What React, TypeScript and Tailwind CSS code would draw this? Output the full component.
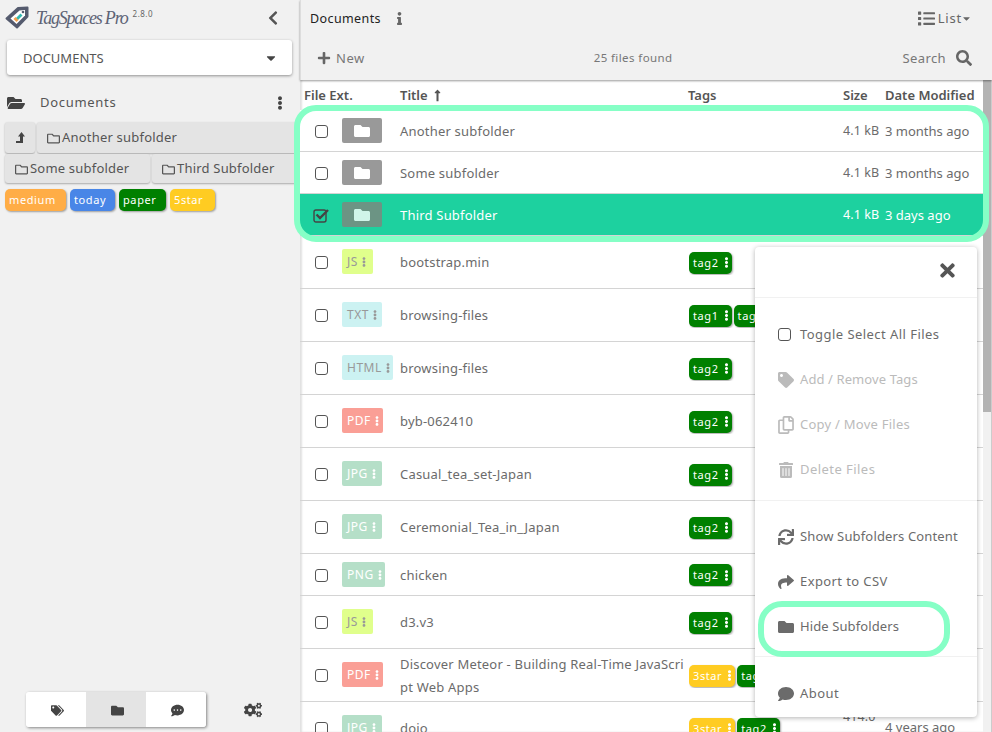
import React from "react";
import {
  FaChevronLeft, FaFolderOpen, FaEllipsisV, FaRegFolder, FaInfo, FaPlus, FaSearch, FaList,
  FaFolder, FaTag, FaTags, FaRegCopy, FaTrashAlt, FaSync, FaShare, FaComment,
  FaCommentDots, FaCogs, FaTimes, FaLongArrowAltUp, FaCaretDown,
} from "react-icons/fa";

const font = { fontFamily: '"Noto Sans", "Liberation Sans", sans-serif' };

function Logo() {
  return (
    <svg width="24" height="24" viewBox="0 0 24 24" className="shrink-0">
      <path d="M1.5 12.5 L13 2 L22.5 1.5 L22.5 10.5 L12 21.5 Z" fill="#555b6e" stroke="#555b6e" strokeWidth="2" strokeLinejoin="round" />
      <path d="M5.5 12.5 L14.5 4.5 L20 4 L20 9.5 L11.5 18 Z" fill="#fff" />
      <path d="M10.5 12.5 L15.5 7.5 L17.5 9.5 L12.5 14.5 Z" fill="#34b8b0" />
      <path d="M8.5 13 L10.5 11 L13.5 14 L11.5 16 Z" fill="#f6a04d" />
      <circle cx="18" cy="6" r="1.3" fill="#555b6e" />
    </svg>
  );
}

function Check({ checked }: { checked?: boolean }) {
  if (checked) {
    return (
      <svg width="17" height="15" viewBox="0 0 17 15" className="shrink-0">
        <rect x="1" y="2" width="12" height="12" rx="2" fill="none" stroke="#444" strokeWidth="1.4" />
        <path d="M3.5 6.5 L7 10 L15 2" fill="none" stroke="#444" strokeWidth="2.4" />
      </svg>
    );
  }
  return <span className="block w-[13px] h-[13px] border-[1.5px] border-[#555] rounded-[3px]" />;
}

function Tag({ label, color, kebab = true }: { label: string; color: string; kebab?: boolean }) {
  return (
    <span className={`inline-flex items-center h-[22px] rounded-[5px] pl-[4px] text-white text-[11px] tracking-[0.6px] shadow-[1px_1px_2px_rgba(0,0,0,0.35)] shrink-0 ${color}`}>
      <span className="pt-[1px]">{label}</span>
      {kebab && <FaEllipsisV className="ml-[2px] text-[11px]" />}
    </span>
  );
}

type Row = {
  ext: string; extBg: string; extText: string; extW: string; title: React.ReactNode; h: string;
  tags?: React.ReactNode; size?: React.ReactNode; date?: string;
};

const jpg = { extBg: "bg-[#b5dfc8]", extText: "text-white", extW: "w-[40px]" };
const pdf = { extBg: "bg-[#fa9f96]", extText: "text-white", extW: "w-[41px]" };
const js = { extBg: "bg-[#e0ff8c]", extText: "text-[#999]", extW: "w-[31px]" };
const txt = { extBg: "bg-[#ccf2f2]", extText: "text-[#999]", extW: "w-[40px]" };

const tag2 = <Tag label="tag2" color="bg-[#008000]" />;

const rows: Row[] = [
  { ext: "JS", ...js, title: "bootstrap.min", h: "h-[53px]", tags: tag2 },
  { ext: "TXT", ...txt, title: "browsing-files", h: "h-[53px]", tags: <><Tag label="tag1" color="bg-[#008000]" /><Tag label="tag2" color="bg-[#008000]" /></> },
  { ext: "HTML", ...txt, extW: "w-[51px]", title: "browsing-files", h: "h-[53px]", tags: tag2 },
  { ext: "PDF", ...pdf, title: "byb-062410", h: "h-[53px]", tags: tag2 },
  { ext: "JPG", ...jpg, title: "Casual_tea_set-Japan", h: "h-[53px]", tags: tag2 },
  { ext: "JPG", ...jpg, title: "Ceremonial_Tea_in_Japan", h: "h-[53px]", tags: tag2 },
  { ext: "PNG", ...jpg, extW: "w-[43px]", title: <span className="block pt-[1px]">chicken</span>, h: "h-[42px]", tags: tag2 },
  { ext: "JS", ...js, title: "d3.v3", h: "h-[53px]", tags: tag2 },
  { ext: "PDF", ...pdf, title: <span className="block pt-[1px]">Discover Meteor - Building Real-Time JavaScri<br />pt Web Apps</span>, h: "h-[53px]", tags: <><Tag label="3star" color="bg-[#ffcc22]" /><Tag label="tag2" color="bg-[#008000]" /></> },
  { ext: "JPG", ...jpg, title: "dojo", h: "h-[53px]", tags: <><Tag label="3star" color="bg-[#ffcc22]" /><Tag label="tag2" color="bg-[#008000]" /></>, size: <>414.0<br />kB</>, date: "4 years ago" },
];

function FolderRow({ title, date, selected }: { title: string; date: string; selected?: boolean }) {
  return (
    <div className={`flex items-center h-[42px] border-b border-[#d4d4d4] ${selected ? "bg-[#1dd19f] text-white" : "bg-white text-[#6b6b6b]"}`}>
      <span className="w-[42px] flex justify-center pl-[1px] pt-[1px]">
        <Check checked={selected} />
      </span>
      <span className={`w-[40px] h-[25px] rounded-[2px] flex items-center justify-center ${selected ? "bg-[#6c9484]" : "bg-[#999]"}`}>
        <FaFolder className={`text-[16px] ${selected ? "text-[#d0f5e9]" : "text-white"}`} />
      </span>
      <span className="ml-[18px] w-[443px] pt-[2px] text-[13px] tracking-[0.2px]">{title}</span>
      <span className="w-[42px] pt-[2px] text-[12.5px] tracking-[0.1px] whitespace-nowrap">4.1 kB</span>
      <span className="pt-[2px] text-[13px] tracking-[0px] whitespace-nowrap">{date}</span>
    </div>
  );
}

function MenuItem({ icon, label, disabled, track }: { icon: React.ReactNode; label: string; disabled?: boolean; track: string }) {
  return (
    <div className={`flex items-center h-[45px] pl-[23px] ${disabled ? "text-[#bbb]" : "text-[#6b6b6b]"}`}>
      <span className="w-[22px] flex justify-start text-[16px]">{icon}</span>
      <span className={`text-[13px] whitespace-nowrap ${track}`}>{label}</span>
    </div>
  );
}

function SideBtn({ children, cls }: { children: React.ReactNode; cls: string }) {
  return (
    <div className={`flex items-center bg-[#e4e4e4] rounded-[3px] shadow-[0_1px_2px_rgba(0,0,0,0.3)] text-[#555] text-[13px] tracking-[0.2px] whitespace-nowrap ${cls}`}>
      {children}
    </div>
  );
}

export default function App() {
  return (
    <div style={font} className="relative w-[992px] h-[732px] overflow-hidden flex bg-white">
      {/* Sidebar */}
      <aside className="w-[300px] h-full shrink-0 bg-[#f1f1f1] flex flex-col overflow-hidden">
        <div className="flex items-center h-[40px] pl-[5px] pb-[5px] pt-[1px]">
          <Logo />
          <span className="ml-[7px] text-[#5d6375] text-[18px] italic tracking-[-1.2px] whitespace-nowrap" style={{ fontFamily: '"Liberation Serif", serif' }}>TagSpaces Pro</span>
          <span className="ml-[5px] mb-[8px] text-[8px] tracking-[0.5px] text-[#666]">2.8.0</span>
          <FaChevronLeft className="ml-auto mr-[19px] text-[16px] text-[#555]" />
        </div>
        <div className="mx-[7px] w-[285px] h-[35px] bg-white rounded-[3px] shadow-[0_1px_3px_rgba(0,0,0,0.4)] flex items-center pl-[16px] pr-[14px] text-[13px] tracking-[0px] text-[#555]">
          <span className="pt-[2px]">DOCUMENTS</span>
          <FaCaretDown className="ml-auto text-[14px] text-[#444]" />
        </div>
        <div className="flex items-center h-[26px] mt-[14px] pt-[1px] pl-[7px] pr-[13px] text-[#555] text-[13px] tracking-[0.7px]">
          <FaFolderOpen className="text-[18px] w-[18px] shrink-0 text-[#444]" />
          <span className="ml-[15px]">Documents</span>
          <FaEllipsisV className="ml-auto text-[14px] text-[#444]" />
        </div>
        <div className="mt-[7px] pl-[5px] flex gap-[2px] h-[31px]">
          <SideBtn cls="w-[30px] justify-center">
            <svg width="10" height="12" viewBox="0 0 10 12"><path d="M6.5 0 L10 4.5 H8 V11 H1 V9 H5 V4.5 H3 Z" fill="#444" /></svg>
          </SideBtn>
          <SideBtn cls="flex-1 pl-[10px] pt-[1px] -mr-[6px]"><FaRegFolder className="text-[13px] mr-[2px] text-[#555]" />Another subfolder</SideBtn>
        </div>
        <div className="mt-[1px] pl-[5px] flex gap-[2px] h-[29px]">
          <SideBtn cls="w-[145px] pl-[10px] pt-[1px]"><FaRegFolder className="text-[13px] mr-[2px]" />Some subfolder</SideBtn>
          <SideBtn cls="flex-1 pl-[10px] pt-[1px] -mr-[6px]"><FaRegFolder className="text-[13px] mr-[2px]" />Third Subfolder</SideBtn>
        </div>
        <div className="mt-[6px] pl-[5px] flex gap-[4px]">
          <Tag label="medium" color="bg-[#ffad46] w-[61px]" kebab={false} />
          <Tag label="today" color="bg-[#4986e7] w-[45px]" kebab={false} />
          <Tag label="paper" color="bg-[#008000] w-[47px]" kebab={false} />
          <Tag label="5star" color="bg-[#ffcc22] w-[45px]" kebab={false} />
        </div>
        <div className="mt-auto mb-[5px] ml-[26px] flex items-center">
          <div className="flex h-[35px] w-[180px] rounded-[3px] shadow-[1px_1px_3px_rgba(0,0,0,0.45)] overflow-hidden text-[#444] text-[13px]">
            <span className="w-[60px] bg-white flex items-center justify-center pl-[3px] pt-[1px]"><FaTags /></span>
            <span className="w-[60px] bg-[#e4e4e4] flex items-center justify-center pl-[3px] pt-[1px]"><FaFolder /></span>
            <span className="w-[60px] bg-white flex items-center justify-center pl-[3px] pt-[1px]"><FaCommentDots /></span>
          </div>
          <FaCogs className="ml-[38px] text-[18px] text-[#444]" />
        </div>
      </aside>

      {/* Main */}
      <main className="flex-1 min-w-0 h-full flex flex-col shadow-[inset_2px_0_2px_rgba(0,0,0,0.12)]">
        <header className="h-[80px] shrink-0 bg-[#f1f1f1] shadow-[0_1px_2px_rgba(0,0,0,0.4)] z-10 flex flex-col border-l border-[#ddd]">
          <div className="flex items-center h-[37px] pl-[9px] pr-[20px]">
            <span className="pt-[1px] text-[#222] text-[12.5px] tracking-[0.4px]">Documents</span>
            <FaInfo className="ml-[12px] text-[13px] text-[#666]" />
            <span className="ml-auto flex items-center text-[#666] text-[13px] tracking-[0.8px]">
              <FaList className="text-[17px] mr-[3px]" />List<FaCaretDown className="text-[11px] -ml-[1px]" />
            </span>
          </div>
          <div className="flex items-center h-[42px] pl-[16px] pr-[20px] text-[#777] text-[13px]">
            <FaPlus className="text-[14px] text-[#666] mr-[5px]" />
            <span className="pt-[1px] tracking-[0.5px]">New</span>
            <span className="ml-[229px] text-[11.5px] tracking-[0.4px] whitespace-nowrap">25 files found</span>
            <span className="pt-[1px] ml-auto tracking-[0.4px]">Search</span>
            <FaSearch className="ml-[10px] text-[16px] text-[#666]" />
          </div>
        </header>

        <div className="flex-1 flex min-h-0">
          <div className="w-[683px] shrink-0 overflow-hidden">
            <div className="flex items-center h-[30px] pl-[4px] pt-[1px] text-[#555] text-[13px] font-semibold whitespace-nowrap">
              <span className="w-[96px]">File Ext.</span>
              <span className="w-[288px] flex items-center">Title<FaLongArrowAltUp className="ml-[3px] text-[13px]" /></span>
              <span className="w-[155px]">Tags</span>
              <span className="w-[42px]">Size</span>
              <span>Date Modified</span>
            </div>
            <FolderRow title="Another subfolder" date="3 months ago" />
            <FolderRow title="Some subfolder" date="3 months ago" />
            <FolderRow title="Third Subfolder" date="3 days ago" selected />
            {rows.map((r, i) => (
              <div key={i} className={`flex items-center border-b border-[#d4d4d4] text-[#6b6b6b] ${r.h}`}>
                <span className="w-[42px] flex justify-center pl-[1px] pt-[1px]"><Check /></span>
                <span className="w-[58px] shrink-0 flex items-center -mt-[1px]">
                  <span className={`${r.extBg} ${r.extText} ${r.extW} h-[25px] rounded-[2px] inline-flex items-center pl-[5px] pt-[1px] text-[12px] tracking-[0.5px] gap-[1px]`}>
                    {r.ext}<FaEllipsisV className="text-[10px]" />
                  </span>
                </span>
                <span className="w-[288px] shrink-0 text-[13px] tracking-[0.2px] leading-[23px] whitespace-nowrap">{r.title}</span>
                <span className="w-[155px] shrink-0 flex gap-[2px] overflow-hidden pt-[2px] pb-[1px] ml-[1px] -mr-[1px]">{r.tags}</span>
                <span className="w-[42px] shrink-0 text-[12.5px] tracking-[0.1px] leading-[23px]">{r.size}</span>
                <span className="text-[13px] tracking-[0px] whitespace-nowrap">{r.date}</span>
              </div>
            ))}
          </div>
          <div className="w-[9px] shrink-0 bg-[#f1f1f1] self-stretch border-r border-[#ccc]">
            <div className="h-[332px] bg-[#b3b3b3]" />
          </div>
        </div>
      </main>

      {/* Floating menu */}
      <div className="absolute left-[755px] top-[247px] w-[222px] h-[470px] bg-white rounded-[4px] shadow-[0_1px_5px_rgba(0,0,0,0.3)] z-20 flex flex-col">
        <div className="h-[51px] shrink-0 border-b border-[#f1f1f1] flex justify-end items-center pr-[19px] pb-[3px] text-[#555] text-[21px]">
          <FaTimes />
        </div>
        <div className="pt-[14px] pb-[8px] border-b border-[#f1f1f1]">
          <MenuItem icon={<Check />} label="Toggle Select All Files" track="tracking-[0.45px]" />
          <MenuItem icon={<FaTag />} label="Add / Remove Tags" disabled track="tracking-[0.1px]" />
          <MenuItem icon={<FaRegCopy className="text-[18px] -ml-[1px]" />} label="Copy / Move Files" disabled track="tracking-[0.25px]" />
          <MenuItem icon={<FaTrashAlt />} label="Delete Files" disabled track="tracking-[0.45px]" />
        </div>
        <div className="pt-[13px] pb-[7px] border-b border-[#f1f1f1]">
          <MenuItem icon={<FaSync />} label="Show Subfolders Content" track="tracking-[0.15px]" />
          <MenuItem icon={<FaShare />} label="Export to CSV" track="tracking-[0.4px]" />
          <MenuItem icon={<FaFolder />} label="Hide Subfolders" track="tracking-[0.1px]" />
        </div>
        <div className="pt-[14px]">
          <MenuItem icon={<FaComment />} label="About" track="tracking-[0.45px]" />
        </div>
      </div>

      {/* Highlights */}
      <div className="absolute left-[294px] top-[105px] w-[695px] h-[137px] border-[6px] border-[#86ffc6] rounded-[22px] z-10 pointer-events-none" />
      <div className="absolute left-[758px] top-[601px] w-[192px] h-[56px] border-[6px] border-[#86ffc6] rounded-[24px] z-30 pointer-events-none" />
    </div>
  );
}
